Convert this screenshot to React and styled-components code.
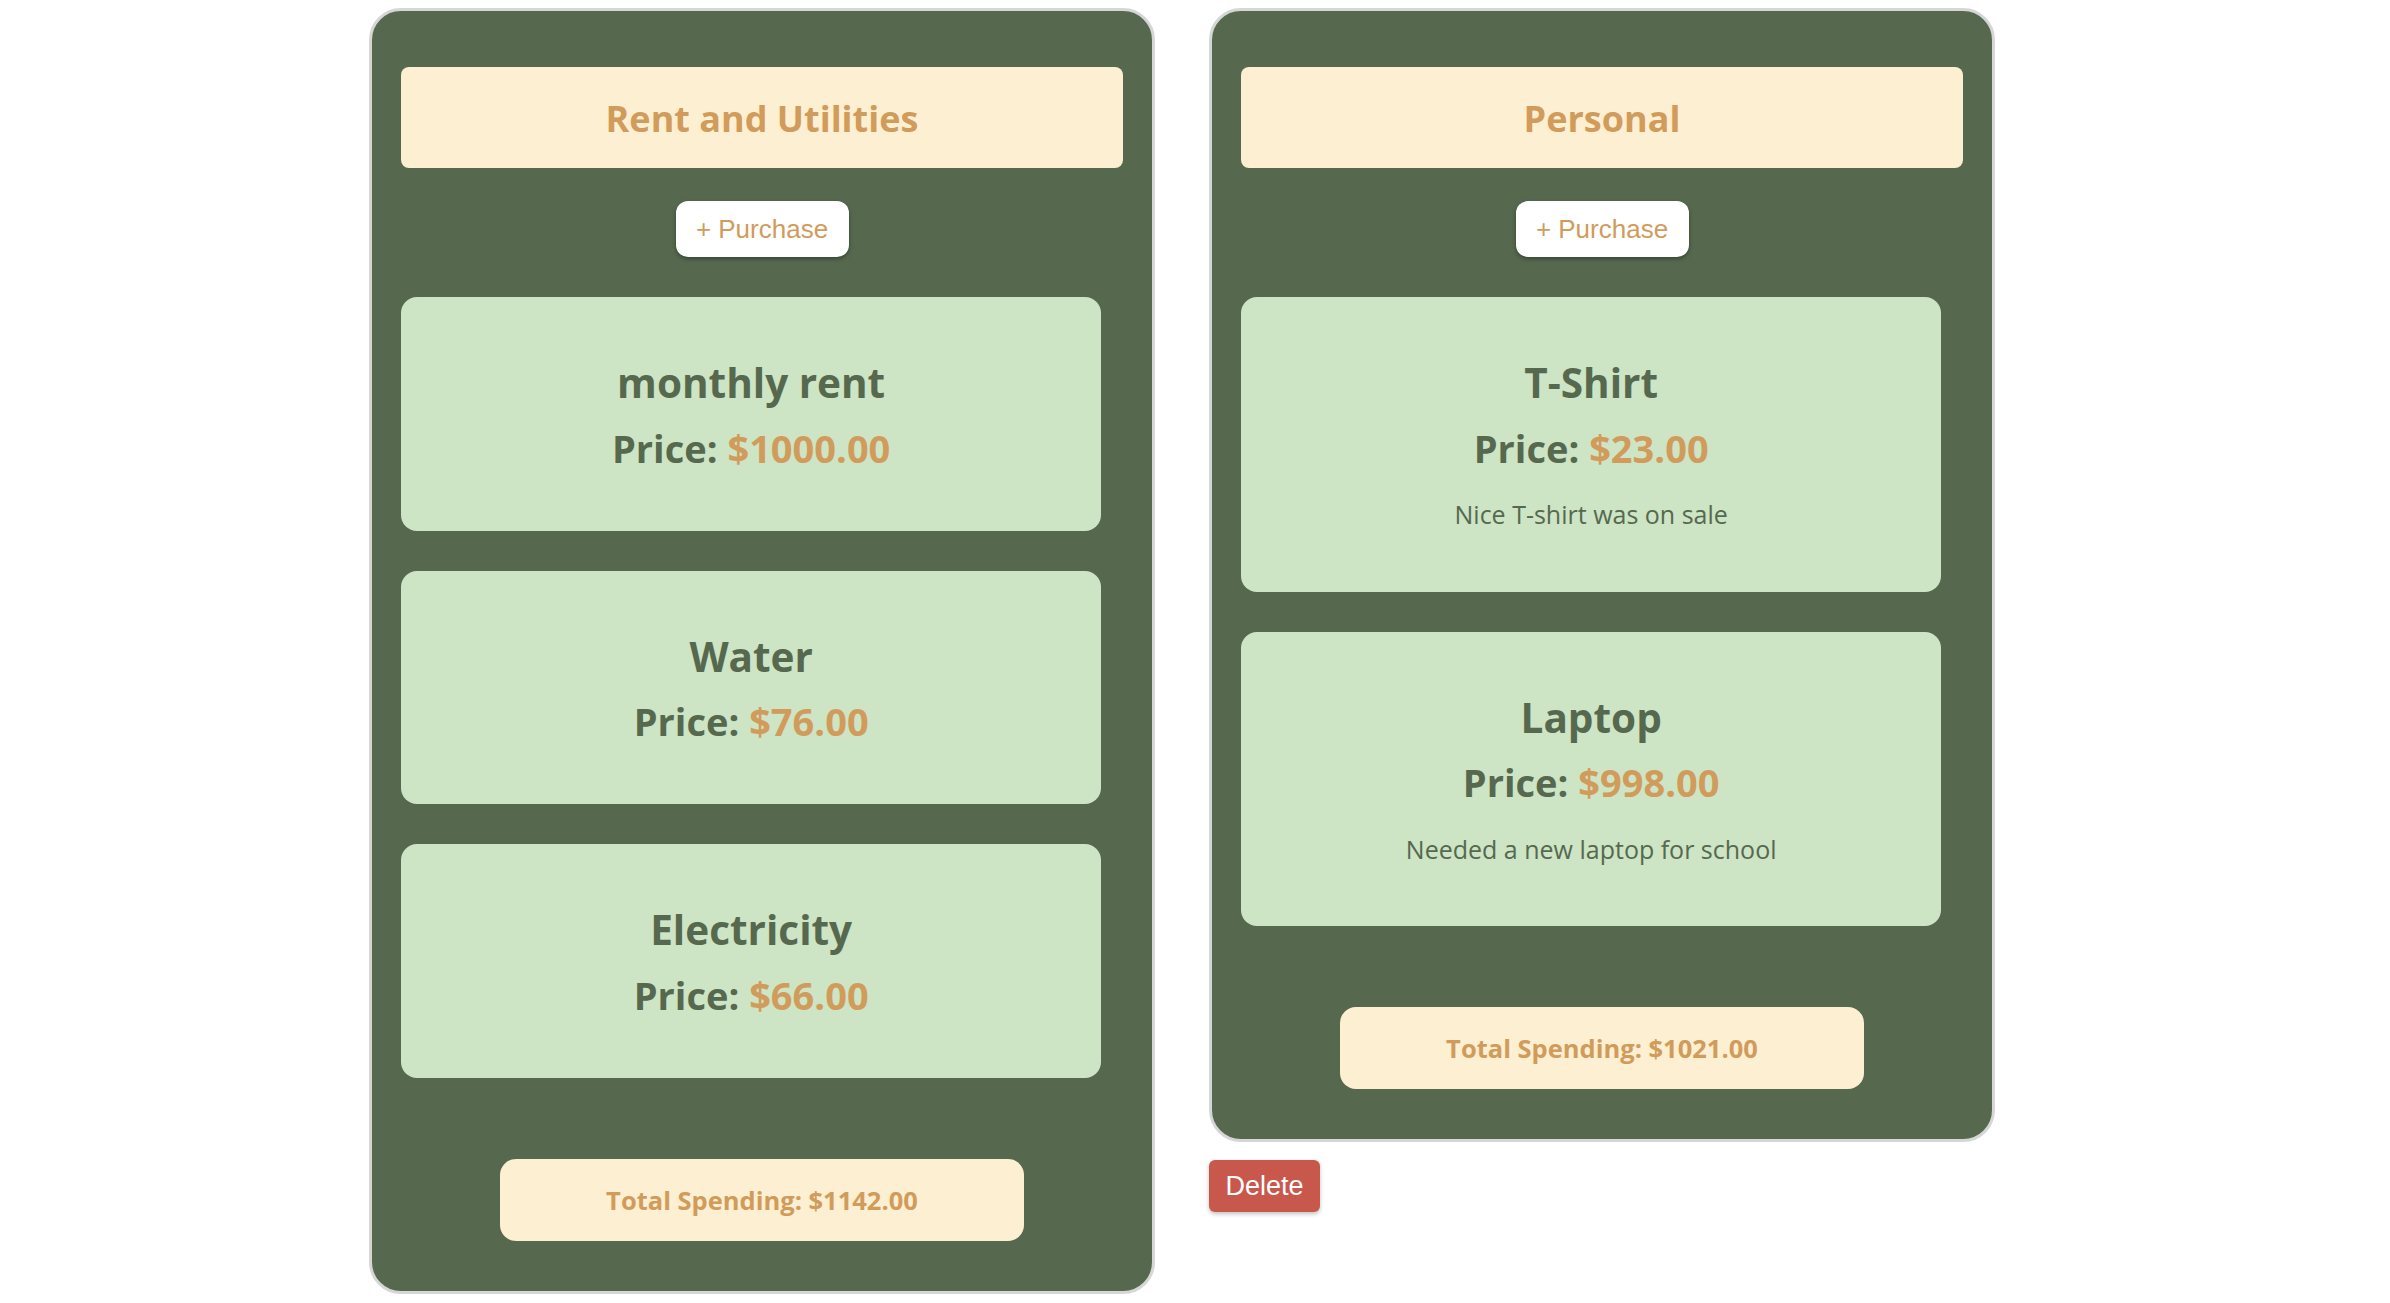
import React from 'react'
import styled, { createGlobalStyle } from 'styled-components'

const categories = [
  {
    title: 'Rent and Utilities',
    total: '1142.00',
    deletable: false,
    items: [
      { name: 'monthly rent', price: '1000.00' },
      { name: 'Water', price: '76.00' },
      { name: 'Electricity', price: '66.00' },
    ],
  },
  {
    title: 'Personal',
    total: '1021.00',
    deletable: true,
    items: [
      { name: 'T-Shirt', price: '23.00', description: 'Nice T-shirt was on sale' },
      { name: 'Laptop', price: '998.00', description: 'Needed a new laptop for school' },
    ],
  },
]

const App = () => {
  return (
    <>
      <GlobalStyle />
      <Board>
        {categories.map((cat, index) => (
          <Column key={index}>
            <Panel>
              <Header>{cat.title}</Header>
              <PurchaseButton>+ Purchase</PurchaseButton>
              <ItemList>
                {cat.items.map((item, i) => (
                  <ItemCard key={i}>
                    <ItemName>{item.name}</ItemName>
                    <ItemPrice>
                      Price: <Amount>${item.price}</Amount>
                    </ItemPrice>
                    {item.description && <ItemDescription>{item.description}</ItemDescription>}
                  </ItemCard>
                ))}
              </ItemList>
              <Total>Total Spending: ${cat.total}</Total>
            </Panel>
            {cat.deletable && <DeleteButton>Delete</DeleteButton>}
          </Column>
        ))}
      </Board>
    </>
  )
}

export default App

const GlobalStyle = createGlobalStyle`
  body {
    margin: 8px;
    background: #fff;
    font-family: "Open Sans", "Noto Sans", sans-serif;
  }
`

const Board = styled.div`
  display: flex;
  align-items: flex-start;
  gap: 54px;
  padding-left: 361px;
`

const Column = styled.div`
  display: flex;
  flex-direction: column;
  align-items: flex-start;
`

const Panel = styled.section`
  width: 786px;
  box-sizing: border-box;
  background: #56694f;
  border: 3px solid #d6d6d6;
  border-radius: 32px;
  padding: 56px 29px 50px;
  display: flex;
  flex-direction: column;
  align-items: center;
`

const Header = styled.h2`
  width: 100%;
  box-sizing: border-box;
  margin: 0;
  height: 101px;
  padding-top: 3px;
  display: flex;
  align-items: center;
  justify-content: center;
  background: #fdefd1;
  border-radius: 8px;
  color: #d19c5b;
  font-size: 36px;
  line-height: 1.2;
  font-weight: 700;
`

const PurchaseButton = styled.button`
  margin-top: 33px;
  width: 173px;
  height: 56px;
  border: none;
  border-radius: 12px;
  background: #fff;
  color: #d19c5b;
  font-family: "Liberation Sans", Arial, sans-serif;
  font-size: 26px;
  box-shadow: 0 2px 4px rgba(0, 0, 0, 0.35);
  cursor: pointer;
`

const ItemList = styled.div`
  width: 100%;
  margin-top: 40px;
  display: flex;
  flex-direction: column;
  gap: 40px;
`

const ItemCard = styled.div`
  width: 97%;
  box-sizing: border-box;
  background: #cde4c5;
  border-radius: 16px;
  padding: 62px 16px 59.5px;
  display: flex;
  flex-direction: column;
  align-items: center;
  text-align: center;
  color: #56694f;
`

const ItemName = styled.h3`
  margin: 0;
  font-size: 40.5px;
  line-height: 1.2;
  font-weight: 700;
`

const ItemPrice = styled.p`
  margin: 18px 0 0;
  font-size: 38px;
  line-height: 1.2;
  font-weight: 700;
`

const Amount = styled.span`
  color: #d19c5b;
`

const ItemDescription = styled.p`
  margin: 28px 0 3px;
  font-size: 25px;
  line-height: 1.2;
  font-weight: 400;
`

const Total = styled.div`
  margin-top: 81px;
  width: 524px;
  height: 82px;
  display: flex;
  align-items: center;
  justify-content: center;
  background: #fdefd1;
  border-radius: 16px;
  color: #d19c5b;
  font-size: 25.5px;
  line-height: 1.2;
  font-weight: 700;
`

const DeleteButton = styled.button`
  margin-top: 18px;
  width: 111px;
  height: 52px;
  border: none;
  border-radius: 6px;
  background: #c9584c;
  color: #fff;
  font-family: "Liberation Sans", Arial, sans-serif;
  font-size: 27px;
  box-shadow: 0 2px 4px rgba(0, 0, 0, 0.25);
  cursor: pointer;
`
